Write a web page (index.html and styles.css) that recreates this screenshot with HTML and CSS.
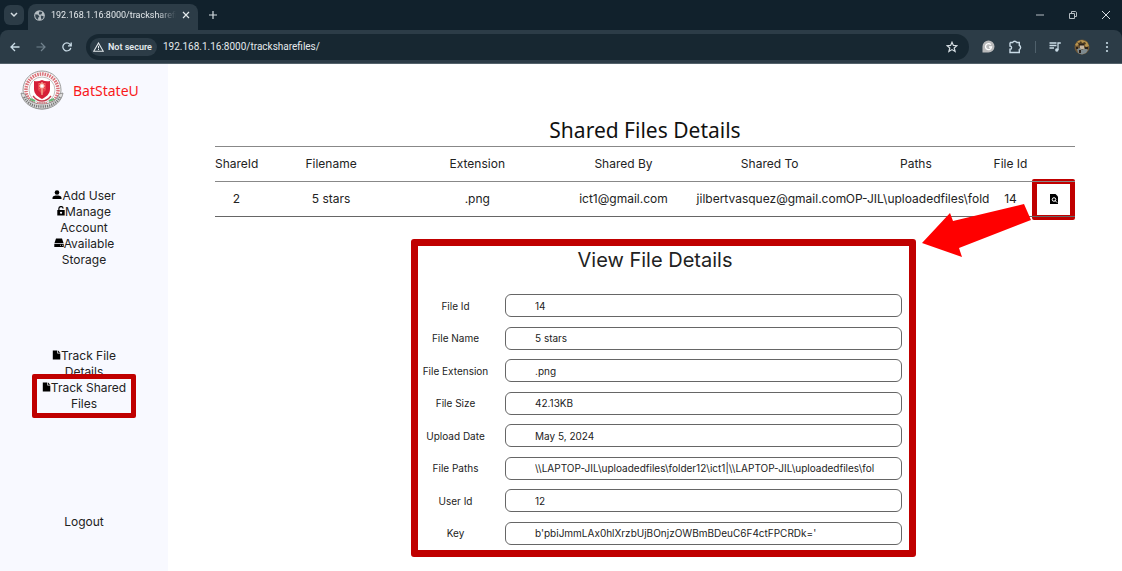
FILE: index.html
```html
<!DOCTYPE html>
<html lang="en">
<head>
<meta charset="utf-8">
<title>Shared Files Details</title>
<link rel="stylesheet" href="styles.css">
</head>
<body>
<header class="browser">
  <div class="tabbar">
    <button class="tab-search" aria-label="Search tabs"><svg width="8" height="6" viewBox="0 0 8 6"><path d="M1 1l3 3 3-3" fill="none" stroke="#d5dde2" stroke-width="1.5"/></svg></button>
    <div class="tab">
      <svg width="11" height="11" viewBox="0 0 16 16"><circle cx="8" cy="8" r="7.8" fill="#b5bdc2"/><path d="M2 6l4 1 2 3-2 1v3C3 13 1 10 2 6zM8 2l4 1-1 3-3 1-1-2zM10 8l4 1c0 2-1 4-3 5l-1-3z" fill="#33434e"/></svg>
      <span class="tab-title">192.168.1.16:8000/tracksharefiles/</span>
      <button class="plain" aria-label="Close tab"><svg width="8" height="8" viewBox="0 0 8 8"><path d="M1 1l6 6M7 1L1 7" stroke="#e4e9ec" stroke-width="1.2"/></svg></button>
    </div>
    <button class="plain new-tab" aria-label="New tab"><svg width="10" height="10" viewBox="0 0 10 10"><path d="M5 1v8M1 5h8" stroke="#d5dde2" stroke-width="1.2"/></svg></button>
    <div class="window-buttons">
      <button class="plain" aria-label="Minimize"><svg width="10" height="10" viewBox="0 0 10 10"><path d="M1 5h8" stroke="#b5bdc2"/></svg></button>
      <button class="plain" aria-label="Restore"><svg width="10" height="10" viewBox="0 0 10 10"><path d="M1.500 3.500h5v5h-5zM3.500 3V1.500h4.200l.8.800v4.200H7" fill="none" stroke="#b5bdc2"/></svg></button>
      <button class="plain" aria-label="Close"><svg width="10" height="10" viewBox="0 0 10 10"><path d="M1 1l8 8M9 1L1 9" stroke="#d5dde2"/></svg></button>
    </div>
  </div>
  <div class="toolbar">
    <div class="nav-buttons">
      <button class="plain" aria-label="Back"><svg width="10" height="10" viewBox="0 0 10 10"><path d="M9.500 5H1M5 1L1 5l4 4" fill="none" stroke="#c9dbe6" stroke-width="1.300"/></svg></button>
      <button class="plain" aria-label="Forward"><svg width="10" height="10" viewBox="0 0 10 10"><path d="M.500 5H9M5 1l4 4-4 4" fill="none" stroke="#71828e" stroke-width="1.200"/></svg></button>
      <button class="plain" aria-label="Reload"><svg width="10" height="10" viewBox="0 0 10 10"><path d="M8.800 5.800A4 4 0 1 1 8 2.400L9 3.500M9.200.500v3.300H6" fill="none" stroke="#c9dbe6" stroke-width="1.300"/></svg></button>
    </div>
    <div class="address">
      <span class="secure"><svg width="11" height="10" viewBox="0 0 11 10"><path d="M5.500 1L10.300 9.300H.700z" fill="none" stroke="#e4e9ec" stroke-width="1.100"/><path d="M5.500 3.800v2.600M5.500 7v1" stroke="#e4e9ec"/></svg>Not secure</span>
      <input class="url" type="text" aria-label="Address" value="192.168.1.16:8000/tracksharefiles/">
      <button class="plain" aria-label="Bookmark"><svg width="12" height="12" viewBox="0 0 12 12"><path d="M6 1.200l1.400 3.200 3.500.300-2.700 2.300.900 3.500L6 8.600l-3.100 1.900.900-3.500L1.100 4.700l3.500-.300z" fill="none" stroke="#d5dde2" stroke-width="1.200"/></svg></button>
    </div>
    <div class="extensions">
      <button class="plain" aria-label="Grammar"><svg width="13" height="13" viewBox="0 0 13 13"><path d="M.500 12.500V6.500a6 6 0 1 1 6 6z" fill="#b9babb"/><path d="M8.800 4.700A3 3 0 1 0 9.500 7H7" fill="none" stroke="#fff" stroke-width="1.300"/></svg></button>
      <button class="plain" aria-label="Extensions"><svg width="14" height="14" viewBox="0 0 14 14"><path d="M2 2.500h3.200M8.300 2.500H11.300V6M11.300 9v3.500H2V9.300a1.500 1.500 0 0 0 0-3.200V2.500M5 2.500a1.700 1.300 0 0 1 3.400 0M11.300 5.800a1.300 1.700 0 0 1 0 3.400" fill="none" stroke="#c9dbe6" stroke-width="1.400"/></svg></button>
      <span class="divider"></span>
      <button class="plain" aria-label="Media"><svg width="12" height="12" viewBox="0 0 12 12"><path d="M.500 2h7M.500 4.500h7M.500 7H5M9 9V2h2.800" fill="none" stroke="#c9dbe6" stroke-width="1.300"/><circle cx="7.800" cy="9" r="1.700" fill="#c9dbe6"/></svg></button>
      <button class="plain" aria-label="Profile"><svg width="16" height="16" viewBox="0 0 16 16"><circle cx="8" cy="8" r="7.500" fill="#6e5634"/><path d="M1 6l3-4 4-1 5 2 2 4-3 1-2-3-3 1-2-1-2 2z" fill="#b8944f"/><path d="M3 3l2 1 2-2 1 2 3-1 1 2-2 1-2-1-3 1z" fill="#4b3a22"/><path d="M6 6h4v4H6z" fill="#c8b6a0"/><path d="M3 10l3-1 2 2 3-2 3 2-2 3-4 1.500L4 14z" fill="#7d8a90"/><path d="M5 5h5v1.500H5zM11 8h3v2h-3zM5 11h2v3H5zM2 8h2v2H2z" fill="#2b221c"/></svg></button>
      <button class="plain" aria-label="Menu"><svg width="8" height="12" viewBox="0 0 8 12"><g fill="#c9dbe6"><circle cx="4" cy="2" r="1.100"/><circle cx="4" cy="6" r="1.100"/><circle cx="4" cy="10" r="1.100"/></g></svg></button>
    </div>
  </div>
</header>
<div class="page">
  <aside class="sidebar">
    <a class="brand" href="#">
      <svg width="44" height="42" viewBox="0 0 44 42">
        <circle cx="22" cy="20" r="19" fill="#fff" stroke="#9b9b9b"/>
        <circle cx="22" cy="20" r="16" fill="none" stroke="#d9737a" stroke-width="3.500" stroke-dasharray="1.600 .900"/>
        <circle cx="22" cy="20" r="13" fill="#fff" stroke="#a5a5a5" stroke-width=".700"/>
        <path d="M1 23c1 7 8 16 21 16s20-9 21-16l-4 1c-2 6-8 10-17 10S7 30 5 24z" fill="#dedede" stroke="#777" stroke-width=".700"/>
        <path d="M4 27c5 8 11 9.500 18 9.500S35 35 40 27" fill="none" stroke="#777" stroke-width="2.500" stroke-dasharray="1.200 1"/>
        <path d="M14 11q4 1 8-1 4 2 8 1v8c0 5-4 8-8 10-4-2-8-5-8-10z" fill="#d51f38"/>
        <path d="M18 13h8v7l-4 4-4-4z" fill="#e8424c"/>
        <path d="M22 12v13M19 16h6M20 13.500l4 5M24 13.500l-4 5" stroke="#ffe7bd" stroke-width=".900"/>
        <circle cx="22" cy="16" r="1.800" fill="#fff"/>
        <path d="M13 26q4 5 9 5t9-5" fill="none" stroke="#c53b4c" stroke-width="1.300"/>
        <path d="M10 29l5 2M29 31l5-2" stroke="#65b978" stroke-width="2"/>
        <path d="M17 33h10" stroke="#d9737a" stroke-width="1.500" stroke-dasharray="1.500 .700"/>
      </svg>
      <span>BatStateU</span>
    </a>
    <nav class="menu">
      <div class="menu-group accounts">
        <a href="#"><svg class="icon" width="10" height="10" viewBox="0 0 10 10"><circle cx="5" cy="2.500" r="2.300"/><path d="M.500 9V8C.500 6 3 5.500 5 5.500S9.500 6 9.500 8v1z"/></svg>Add User</a>
        <a href="#"><svg class="icon" width="8" height="10" viewBox="0 0 8 10"><path d="M.300 4h1V2.800a2.700 2.700 0 0 1 5.400-.300H5.500a1.500 1.500 0 0 0-3 .300V4h5.200v5.500H.300zM4 5.800a1 1 0 1 0 .1 0z" fill-rule="evenodd"/></svg>Manage Account</a>
        <a href="#"><svg class="icon" width="10" height="10" viewBox="0 0 10 10"><path d="M2 .500h6L9.500 5h-9zM.300 5.700h9.400V9H.300z"/><path d="M6 7.300h1M8 7.300h1" stroke="#fff" stroke-width=".700"/></svg>Available Storage</a>
      </div>
      <div class="menu-group tracking">
        <a href="#"><svg class="icon" width="9" height="10" viewBox="0 0 9 10"><path d="M.800.500h4.500v3h3v6H.800zM6 .500l2.300 2.300H6z"/></svg>Track File Details</a>
        <a class="selected" href="#"><svg class="icon" width="9" height="10" viewBox="0 0 9 10"><path d="M.800.500h4.500v3h3v6H.800zM6 .500l2.300 2.300H6z"/></svg>Track Shared Files</a>
      </div>
      <a class="logout" href="#">Logout</a>
    </nav>
  </aside>
  <main class="content">
    <h1>Shared Files Details</h1>
    <table class="files">
      <thead>
        <tr><th class="narrow">ShareId</th><th>Filename</th><th>Extension</th><th>Shared By</th><th>Shared To</th><th>Paths</th><th class="narrow">File Id</th><th class="narrow"></th></tr>
      </thead>
      <tbody>
        <tr><td>2</td><td>5 stars</td><td>.png</td><td>ict1@gmail.com</td><td>jilbertvasquez@gmail.com</td><td class="path">OP-JIL\uploadedfiles\folde</td><td>14</td>
        <td class="action"><button class="plain view" aria-label="View file"><svg width="8" height="10" viewBox="0 0 8 10"><path d="M0 0h5.500L8 2.500V10H0z"/><circle cx="4" cy="5.500" r="1.800" fill="none" stroke="#fff"/><path d="M5 6.500l2 2" stroke="#fff"/></svg></button></td></tr>
      </tbody>
    </table>
    <section class="details">
      <h2>View File Details</h2>
      <form class="fields">
        <div class="field"><label for="f-id">File Id</label><input id="f-id" value="14" readonly></div>
        <div class="field"><label for="f-name">File Name</label><input id="f-name" value="5 stars" readonly></div>
        <div class="field"><label for="f-ext">File Extension</label><input id="f-ext" value=".png" readonly></div>
        <div class="field"><label for="f-size">File Size</label><input id="f-size" value="42.13KB" readonly></div>
        <div class="field"><label for="f-date">Upload Date</label><input id="f-date" value="May 5, 2024" readonly></div>
        <div class="field"><label for="f-paths">File Paths</label><input id="f-paths" value="\\LAPTOP-JIL\uploadedfiles\folder12\ict1|\\LAPTOP-JIL\uploadedfiles\fol" readonly></div>
        <div class="field"><label for="f-user">User Id</label><input id="f-user" value="12" readonly></div>
        <div class="field"><label for="f-key">Key</label><input id="f-key" value="b'pbiJmmLAx0hlXrzbUjBOnjzOWBmBDeuC6F4ctFPCRDk='" readonly></div>
      </form>
      <svg class="arrow" width="110" height="56" viewBox="0 0 110 56" aria-hidden="true"><path d="M0 40L28 10l3 8L102 1l7 16L37 45l3 9z" fill="#f00"/></svg>
    </section>
  </main>
</div>
</body>
</html>
```
FILE: styles.css
```css
* { box-sizing: border-box; }

body {
  margin: 0;
  min-height: 100vh;
  display: flex;
  flex-direction: column;
  background: #fff;
  color: #222;
  font: 12px/16px Inter, "Liberation Sans", sans-serif;
}

a { color: inherit; text-decoration: none; }
svg { display: block; flex: none; }

.plain {
  display: flex;
  padding: 0;
  border: 0;
  background: none;
}

/* Browser frame */
.browser {
  background: #11212c;
  color: #e4e9ec;
  font-family: Roboto, sans-serif;
}

.tabbar {
  display: flex;
  align-items: center;
  height: 30px;
  padding: 0 11px 0 4px;
}

.tab-search {
  display: grid;
  place-items: center;
  width: 20px;
  height: 20px;
  padding: 0;
  border: 0;
  border-radius: 6px;
  background: #2c3c47;
}

.tab {
  display: flex;
  align-items: center;
  align-self: flex-end;
  gap: 6px;
  width: 170px;
  height: 26px;
  margin-left: 4px;
  padding: 0 8px 4px 6px;
  border-radius: 8px 8px 0 0;
  background: #2c3c47;
  font-size: 9px;
}

.tab-title {
  flex: 1;
  overflow: hidden;
  white-space: nowrap;
  mask-image: linear-gradient(90deg, #000 85%, transparent);
}

.new-tab { margin-left: 10px; }

.window-buttons {
  display: flex;
  gap: 23px;
  margin-left: auto;
}

.toolbar {
  display: flex;
  align-items: center;
  height: 34px;
  padding: 0 11px 0 10px;
  border-bottom: 1px solid #53616a;
  border-radius: 8px 8px 0 0;
  background: #2c3c47;
}

.nav-buttons { display: flex; gap: 16px; }

.address {
  display: flex;
  align-items: center;
  flex: 1;
  gap: 6px;
  height: 26px;
  margin-left: 14px;
  padding: 0 11px 0 4px;
  border-radius: 13px;
  background: #172731;
}

.secure {
  display: flex;
  align-items: center;
  gap: 4px;
  height: 18px;
  padding: 0 5px 0 3px;
  border-radius: 9px;
  background: #2c3c47;
  font-size: 9px;
  font-weight: 600;
}

.url {
  flex: 1;
  min-width: 0;
  padding: 0;
  border: 0;
  background: none;
  color: inherit;
  font: 10px/16px Roboto, sans-serif;
}

.extensions {
  display: flex;
  align-items: center;
  gap: 13px;
  margin-left: 13px;
}

.divider { width: 1px; height: 12px; background: #4f606b; }

/* Page */
.page { display: flex; flex: 1; }

.sidebar {
  width: 168px;
  flex: none;
  background: #f8f9ff;
}

.brand {
  display: flex;
  align-items: center;
  gap: 9px;
  padding: 6px 0 0 20px;
  color: #f8191c;
  font: 14px/20px "Noto Sans", sans-serif;
}

.menu {
  display: flex;
  flex-direction: column;
  align-items: center;
  padding-top: 76px;
}

.menu-group {
  display: flex;
  flex-direction: column;
  width: 92px;
  text-align: center;
}

.accounts { width: 72px; }
.tracking { margin-top: 80px; }
.tracking a:first-child { padding: 0 12px; }
.icon { display: inline; vertical-align: 0; }

.selected {
  margin: -6px;
  padding: 1px 0;
  border: 5px solid #c00000;
  border-radius: 2px;
}

.logout { margin-top: 102px; }

.content {
  flex: 1;
  min-width: 0;
  padding: 52px 47px 14px;
}

h1, h2 { margin: 0; font-weight: 400; text-align: center; }
h1 { color: #111; font: 21px/28px "Noto Sans", sans-serif; }

.files {
  width: 100%;
  margin-top: 2px;
  border-collapse: collapse;
  table-layout: fixed;
  text-align: center;
}

.files tr { height: 35px; border-bottom: 1px solid #666; }
.files thead tr { border-top: 1px solid #888; border-bottom-color: #888; }
.files th, .files td { padding: 0; font-weight: 400; white-space: nowrap; }
.files .narrow { width: 5%; }
.files .path { overflow: hidden; padding-left: 3px; text-align: left; }

.action .view {
  align-items: center;
  justify-content: center;
  width: 100%;
  height: 41px;
  margin: -4px 0;
  border: 5px solid #c00000;
  border-radius: 2px;
}

.details {
  position: relative;
  display: flex;
  flex-direction: column;
  width: 505px;
  max-width: 100%;
  min-height: 318px;
  margin: 22px 0 0 196px;
  padding: 0 7px 5px 0;
  border: 7px solid #c00000;
  border-radius: 3px;
}

.details h2 {
  padding-right: 10px;
  font-size: 20px;
  line-height: 28px;
}

.fields {
  display: flex;
  flex: 1;
  flex-direction: column;
  justify-content: space-between;
  margin-top: 20px;
}

.field { display: flex; align-items: center; font-size: 10px; }
.field label { width: 75px; margin-right: 12px; text-align: center; }

.field input {
  flex: 1;
  min-width: 0;
  height: 23px;
  padding: 0 6px 0 29px;
  border: 1px solid #666;
  border-radius: 6px;
  background: #fff;
  color: #222;
  font: inherit;
}

.arrow { position: absolute; left: calc(100% + 13px); top: -43px; }
```
